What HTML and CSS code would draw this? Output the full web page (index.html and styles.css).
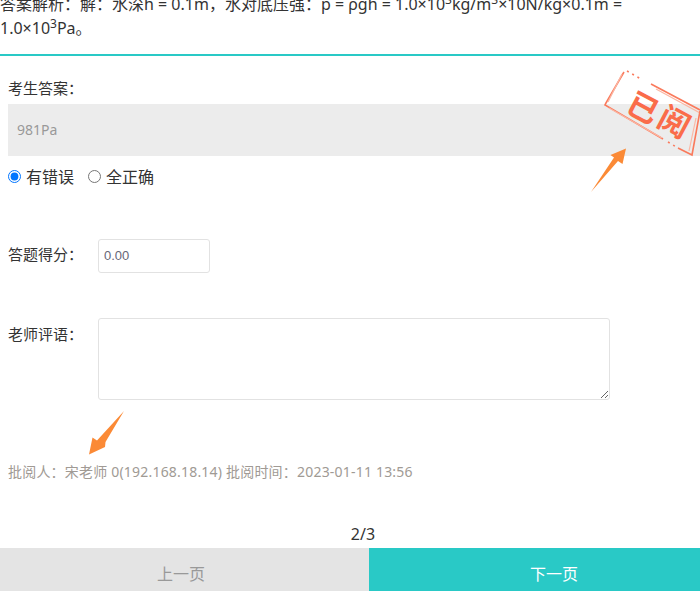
FILE: index.html
```html
<!DOCTYPE html>
<html lang="zh-CN">
<head>
<meta charset="utf-8">
<title>阅卷</title>
<link rel="stylesheet" href="styles.css">
</head>
<body>
<main class="page">
  <section class="analysis">
    <p class="analysis-text">答案解析：解：水深h = 0.1m，水对底压强：p = ρgh = 1.0×10<sup>3</sup>kg/m<sup>3</sup>×10N/kg×0.1m = 1.0×10<sup>3</sup>Pa。</p>
  </section>
  <section class="answer">
    <div class="answer-label">考生答案：</div>
    <div class="answer-box">981Pa</div>
    <div class="judge">
      <label class="judge-item"><input class="radio" type="radio" name="judge" checked>有错误</label>
      <label class="judge-item"><input class="radio" type="radio" name="judge">全正确</label>
    </div>
    <div class="score-row">
      <span class="field-label">答题得分：</span>
      <input class="score-input" type="text" value="0.00">
    </div>
    <div class="comment-row">
      <span class="field-label">老师评语：</span>
      <textarea class="comment"></textarea>
    </div>
    <p class="review-info">批阅人：宋老师 0(192.168.18.14) 批阅时间：2023-01-11 13:56</p>
  </section>
  <div class="pager">2/3</div>
  <nav class="nav">
    <button class="nav-btn nav-prev" type="button">上一页</button>
    <button class="nav-btn nav-next" type="button">下一页</button>
  </nav>
  <svg class="overlay" width="700" height="591" viewBox="0 0 700 591" aria-hidden="true">
    <g class="stamp-lines">
      <path d="M624 72 L606 103 L605 105 L663 139"/>
      <path d="M622 74 L608 102" class="thin"/>
      <path d="M609 108 L662 138" class="thin"/>
      <path d="M651 84 L700 110"/>
      <path d="M656 89 L700 113" class="thin"/>
      <path d="M700 111 L692 155 L678 148"/>
      <path d="M696 118 L689 151" class="thin"/>
      <path d="M627 71 L641 79" class="dots"/>
      <path d="M668 142 L678 148" class="dots"/>
    </g>
    <text class="stamp-text" transform="translate(643 108) rotate(28)" text-anchor="middle" y="11">已</text>
    <text class="stamp-text" transform="translate(674 122) rotate(28)" text-anchor="middle" y="11">阅</text>
    <polygon class="arrow" points="626,148.5 622.5,164 618,161 591,192 614,157.5 610.5,155"/>
    <polygon class="arrow" points="124,411 105.5,442 105,447 89,454.5 92.5,437.5 97,440.5"/>
  </svg>
</main>
</body>
</html>
```
FILE: styles.css
```css
* { box-sizing: border-box; }
html, body { margin: 0; padding: 0; background: #fff; }
body {
  font-family: "Noto Sans", "Noto Sans CJK SC", sans-serif;
  color: #333;
  font-size: 15px;
}
.page {
  position: relative;
  width: 700px;
  height: 591px;
  overflow: hidden;
  display: flex;
  flex-direction: column;
}
.analysis {
  flex: none;
  height: 64px;
  margin-top: -8px;
  border-bottom: 2px solid #29c9c6;
}
.analysis-text {
  margin: 0;
  font-size: 16px;
  line-height: 24px;
  color: #333;
}
.analysis-text sup { font-size: 12px; line-height: 0; }
.answer { flex: 1; padding: 21px 0 0 8px; min-height: 0; }
.answer-label { line-height: 22px; height: 27px; }
.answer-box {
  height: 52px;
  background: #ececec;
  color: #999;
  font-size: 14px;
  line-height: 52px;
  padding-left: 9px;
}
.judge { display: flex; gap: 14px; margin-top: 8px; height: 24px; align-items: center; font-size: 16px; }
.judge-item { display: flex; align-items: center; gap: 5px; }
.radio { margin: 0; width: 13px; height: 13px; }
.score-row { display: flex; align-items: center; margin-top: 51px; }
.field-label { width: 90px; flex: none; position: relative; top: -3px; }
.score-input {
  width: 112px;
  height: 34px;
  border: 1px solid #e2e2e2;
  border-radius: 3px;
  padding: 0 5px 2px;
  font: 13px "Liberation Sans", sans-serif;
  color: #667;
}
.comment-row { display: flex; align-items: flex-start; margin-top: 45px; }
.comment-row .field-label { line-height: 32px; top: 0; }
.comment {
  display: block;
  width: 512px;
  height: 82px;
  border: 1px solid #e2e2e2;
  border-radius: 3px;
  margin: 0;
}
.review-info {
  margin: 61px 0 0;
  font-size: 14px;
  line-height: 22px;
  color: #a09a94;
  letter-spacing: 0.2px;
}
.pager { flex: none; height: 27px; line-height: 27px; text-align: center; padding-left: 26px; font-size: 16px; }
.nav { flex: none; display: flex; height: 43px; }
.nav-btn {
  border: 0;
  padding: 6px 0 0;
  font: 16px "Noto Sans", "Noto Sans CJK SC", sans-serif;
}
.nav-prev { width: 369px; background: #e4e4e4; color: #999; padding-right: 7px; }
.nav-next { flex: 1; background: #29c9c6; color: #fff; padding-left: 39px; }
.overlay { position: absolute; left: 0; top: 0; pointer-events: none; }
.stamp-lines path { fill: none; stroke: #fa7a5c; stroke-width: 1.6; }
.stamp-lines .thin { stroke: #fbb7a4; stroke-width: 1.2; }
.stamp-lines .dots { stroke-dasharray: 2 4; stroke-width: 1.6; }
.stamp-text {
  font-family: "Noto Sans CJK SC", sans-serif;
  font-weight: 700;
  font-size: 31px;
  fill: #fa6c4a;
}
.arrow { fill: #fb8a36; }
```
